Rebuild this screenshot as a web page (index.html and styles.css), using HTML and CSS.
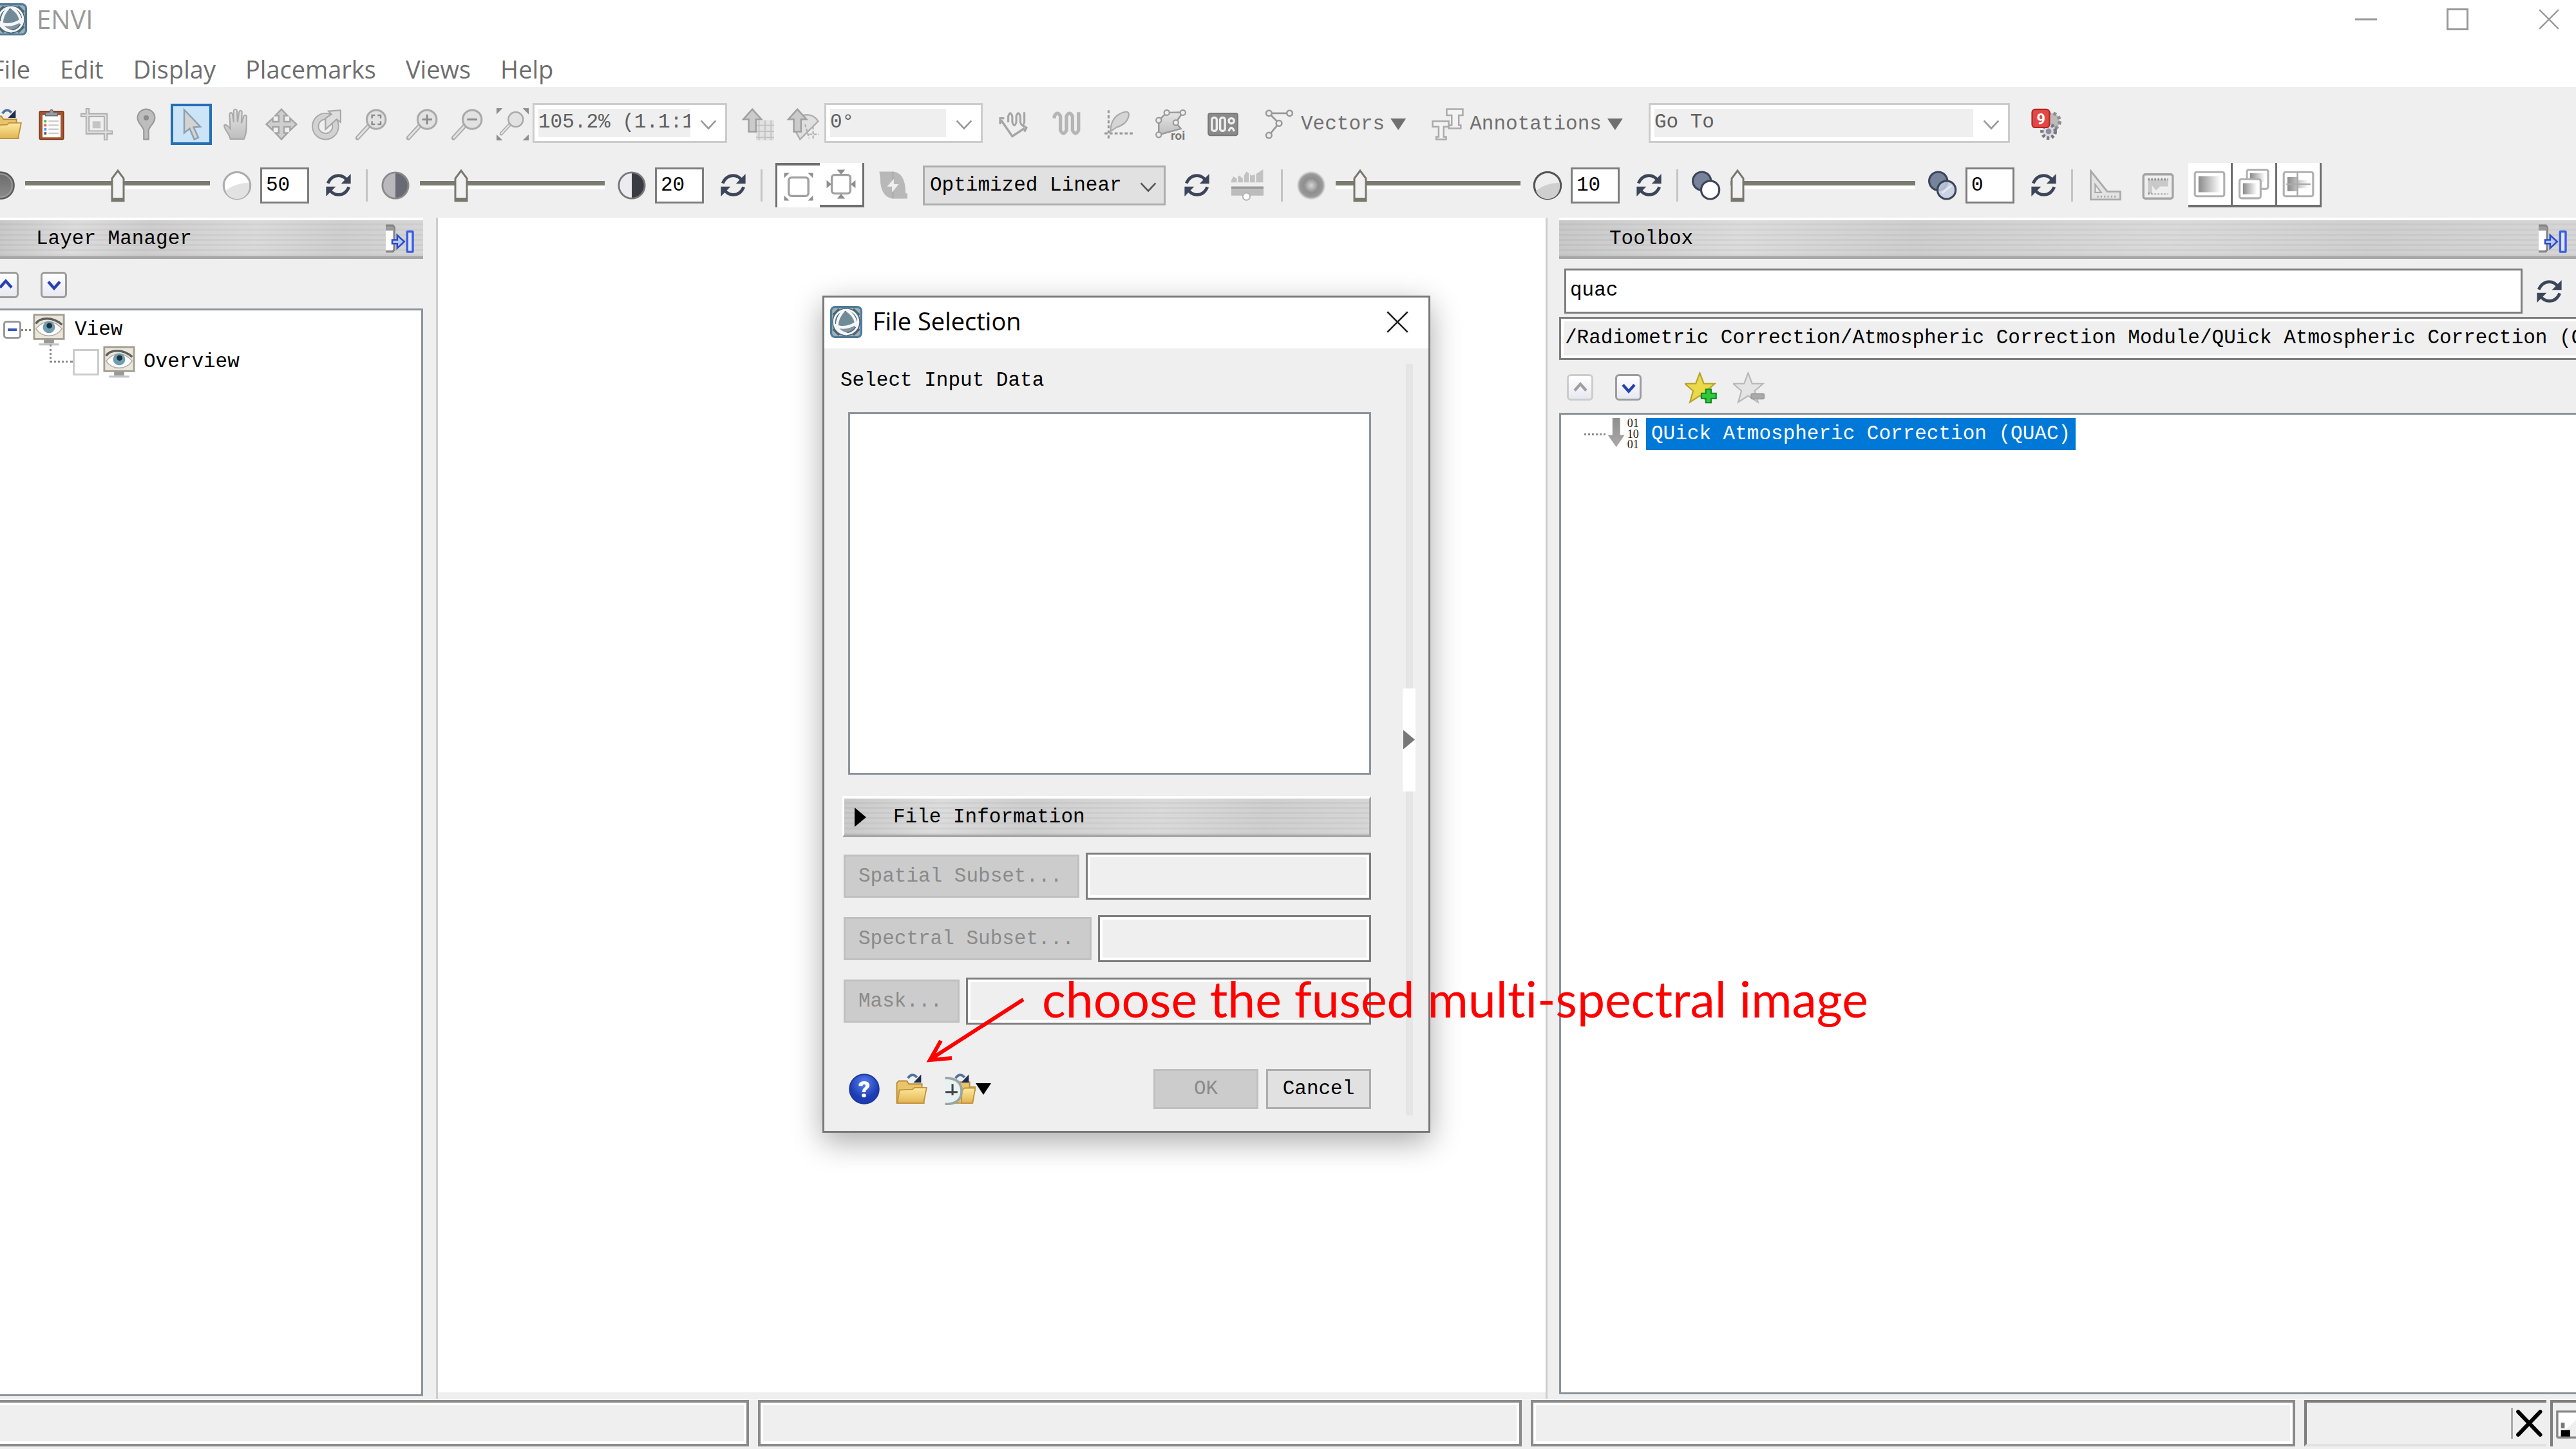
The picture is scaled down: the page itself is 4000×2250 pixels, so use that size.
FILE: index.html
```html
<!DOCTYPE html>
<html lang="en">
<head>
<meta charset="utf-8">
<title>ENVI</title>
<link rel="stylesheet" href="styles.css">
</head>
<body>
<svg class="defs" aria-hidden="true">
  <defs>
    <linearGradient id="gold" x1="0" y1="0" x2="0" y2="1"><stop offset="0" stop-color="#fdeb9e"/><stop offset="1" stop-color="#e3b452"/></linearGradient>
    <linearGradient id="grey" x1="0" y1="0" x2="0" y2="1"><stop offset="0" stop-color="#e6e6e6"/><stop offset="1" stop-color="#bdbdbd"/></linearGradient>
    <linearGradient id="dark" x1="0" y1="0" x2="0" y2="1"><stop offset="0" stop-color="#6a6a6a"/><stop offset="1" stop-color="#8c8c8c"/></linearGradient>
    <linearGradient id="fade" x1="0" y1="0" x2="1" y2="0"><stop offset="0" stop-color="#8a8a8a"/><stop offset="1" stop-color="#ffffff"/></linearGradient>
    <radialGradient id="halo"><stop offset="0" stop-color="#d6d6d6"/><stop offset=".5" stop-color="#8e8e8e"/><stop offset=".8" stop-color="#9a9a9a"/><stop offset="1" stop-color="#efefef"/></radialGradient>
    <radialGradient id="blue" cx=".5" cy=".3"><stop offset="0" stop-color="#5a82f0"/><stop offset="1" stop-color="#1c3cb4"/></radialGradient>
  </defs>
  <symbol id="logo" viewBox="0 0 16 16"><rect x=".5" y=".5" width="15" height="15" rx="2" fill="#9db0bb" stroke="#4f7a96" stroke-width="1"/><path d="M1.500 4.500 4.500 1.500M11.500 14.500l3-3M1.500 11.500l3 3M11.500 1.500l3 3" stroke="#4d6675" stroke-width="1.100"/><circle cx="8" cy="8" r="6" fill="#8296a2" stroke="#4d6675" stroke-width="2"/><path d="M7.500 3Q4.500 6 4 10q4 2.500 8.300 0Q11.500 5 7.500 3z" fill="#718a97"/><g fill="none" stroke="#f4f6f7"><circle cx="8" cy="8" r="6" stroke-width="1"/><path d="M7 2Q3 6 3.500 11q2 2.500 5 3M8 2q5 3 5 8.500" stroke-width="1.300"/><path d="M2.200 9.500q5 3 11.600-1.500" stroke-width="1.500"/></g></symbol>
  <symbol id="folder" viewBox="0 0 16 16"><path d="M.5 15V5l1-1h4l1 1.500H13v2L14 15z" fill="#e9c46a" stroke="#b98b36" stroke-width=".6"/><path d="M.8 15 1.800 8.500l6.500-.3 1-.9h6L13.800 15z" fill="url(#gold)" stroke="#c0923c" stroke-width=".6"/><path d="M6 2.600Q8-.4 10.500 2.200" fill="none" stroke="#52719a" stroke-width="1.200"/><path d="M12.600.8v4H8.800z" fill="#1d2d4d"/></symbol>
  <symbol id="clip" viewBox="0 0 16 16"><rect x="2" y="1.500" width="12" height="14" rx=".6" fill="#a6532f" stroke="#7d3818" stroke-width=".5"/><path d="M3.500 3.500h9v11h-9z" fill="#fff"/><path d="M5 3.800V2h2Q8-.6 9 2h2v1.800z" fill="#9b9ba5" stroke="#666" stroke-width=".4"/><path d="M4.300 6.500h1.200" stroke="#2c2" stroke-width="1.200"/><path d="M4.300 8.500h1.200" stroke="#e55" stroke-width="1.200"/><path d="M4.300 10.500h1.200" stroke="#49f" stroke-width="1.200"/><path d="M4.300 12.500h1.200" stroke="#555" stroke-width="1.200"/><path d="M6.500 6.500h5M6.500 8.500h5M6.500 10.500h5M6.500 12.500h5" stroke="#ccc" stroke-width=".8"/></symbol>
  <symbol id="crop" viewBox="0 0 16 16"><path d="M3.500 0v12H16M0 3.500h12.500V16" fill="none" stroke="#a8a8a8" stroke-width="2"/><path d="M3.500.5v11.500H15.500M.5 3.500h12V15.500" fill="none" stroke="#dcdcdc" stroke-width=".9"/><path d="M6 10V6.500h4V10z" fill="#c4c4c4"/></symbol>
  <symbol id="pin" viewBox="0 0 16 16"><path d="M8 .5a4.300 4.300 0 0 1 4.300 4.300C12.300 7.500 9.500 9 9.200 11v4.500H6.800V11C6.500 9 3.700 7.500 3.700 4.800A4.300 4.300 0 0 1 8 .5z" fill="#bdbdbd" stroke="#999" stroke-width=".7"/><circle cx="8" cy="4.800" r="1.300" fill="#8b8b8b"/></symbol>
  <symbol id="cursor" viewBox="0 0 16 16"><path d="M4.500.8v11.500l2.700-2.200 2.300 5.400 2-.9-2.300-5.100 3.300-.3z" fill="#d3d3d3" stroke="#8fa0ad" stroke-width=".8"/></symbol>
  <symbol id="hand" viewBox="0 0 16 16"><path d="M5 15.300C4.500 12.500 1.500 10 2 8.500c.8-.8 2 .6 3 1.700L4.600 3c.2-1 1.200-1 1.500 0l.6 4V1.300c.2-1 1.400-1 1.600 0L8.600 7l.8-5.200c.3-.9 1.400-.7 1.400.2L10.500 7.500l1.200-3.500c.5-.9 1.500-.5 1.400.4-.3 4 .5 7-1.300 10.900z" fill="url(#grey)" stroke="#aaa" stroke-width=".7"/></symbol>
  <symbol id="move" viewBox="0 0 16 16"><path d="m8 .5 3 3.200H9.300v3h3V5l3.200 3-3.200 3V9.300h-3v3H11l-3 3.200-3-3.200h1.700v-3h-3V11L.5 8l3.200-3v1.700h3v-3H5z" fill="#cfcfcf" stroke="#a5a5a5" stroke-width=".8"/></symbol>
  <symbol id="rotate" viewBox="0 0 16 16"><circle cx="7.500" cy="9" r="5" fill="none" stroke="#a8a8a8" stroke-width="3.600"/><circle cx="7.500" cy="9" r="5" fill="none" stroke="#d2d2d2" stroke-width="2.400"/><path d="M9 1.500 15 1v6l-2-1.500L7.500 10.500V5l3-2z" fill="#dedede" stroke="#a8a8a8" stroke-width=".7"/></symbol>
  <symbol id="glass" viewBox="0 0 16 16"><path d="M6.800 8.500 1 14.800" stroke="#aaa" stroke-width="2.200" stroke-linecap="round"/><path d="M6.800 8.500 1.200 14.600" stroke="#e2e2e2" stroke-width="1" stroke-linecap="round"/><circle cx="10.300" cy="5.600" r="4.700" fill="#e2e2e2" stroke="#aaa" stroke-width="1"/></symbol>
  <symbol id="zfit" viewBox="0 0 16 16"><use href="#glass"/><path d="M8.200 5V3.500h1.500M11 3.500h1.500V5M12.500 6.500V8H11M9.700 8H8.200V6.500" fill="none" stroke="#8c8c8c" stroke-width=".8"/></symbol>
  <symbol id="zin" viewBox="0 0 16 16"><use href="#glass"/><path d="M7.800 5.600h5M10.300 3.100v5" stroke="#8c8c8c"/></symbol>
  <symbol id="zout" viewBox="0 0 16 16"><use href="#glass"/><path d="M7.800 5.600h5" stroke="#8c8c8c"/></symbol>
  <symbol id="zall" viewBox="0 0 16 16"><use href="#glass" x="1.500" y="1.200" width="12.500" height="12.500"/><path d="M0 3V0h3zM13 0h3v3zM16 13v3h-3zM3 16H0v-3z" fill="#8e8e8e"/></symbol>
  <symbol id="north" viewBox="0 0 16 16"><path d="M7 6h9v10H7z" fill="#e2e2e2"/><path d="M7 8.500h9M7 11.500h9M7 14.500h9M8.500 6v10M11.500 6v10M14.500 6v10" stroke="#c2c2c2" stroke-width=".6"/><path d="m5.200.5 4.500 5H7v6.200H3.400V5.500H.7z" fill="#cbcbcb" stroke="#a0a0a0" stroke-width=".8"/></symbol>
  <symbol id="northrot" viewBox="0 0 16 16"><path d="M8 3.500q5-1 7.500 3L6.500 15.500 4 11" fill="#e0e0e0" stroke="#b0b0b0" stroke-width=".8"/><path d="m5.200.5 4.500 5H7v6.200H3.400V5.500H.7z" fill="#cbcbcb" stroke="#a0a0a0" stroke-width=".8"/><path d="M9 8l2 7M11 13h5M13 9v7" stroke="#b0b0b0" stroke-width=".7" stroke-dasharray="1.500 .8"/></symbol>
  <symbol id="profile" viewBox="0 0 16 16"><path d="M1.500 6 7 14l6-4M1 8V5h2M12 8.500l2 1.200-1 2" fill="none" stroke="#a5a5a5" stroke-width="1.100"/><path d="M5 7V4q1-3 2 0v3q1 3 2 0V4q1-3 2 0v3q1 3 2 0V2" fill="none" stroke="#a5a5a5"/></symbol>
  <symbol id="wave" viewBox="0 0 16 16"><path d="M2 5V4q1.500-3 3 0v7q1.500 3 3 0V4q1.500-3 3 0v7q1.500 3 3 0V2" fill="none" stroke="#b5b5b5" stroke-width="1.700"/></symbol>
  <symbol id="scatter" viewBox="0 0 16 16"><path d="M3 1v14M1 12.500h14" stroke="#999" stroke-dasharray="1.500 1"/><path d="M4 11.500Q4 4 10.500 2q3-1 2.500 2Q12 8 7 9.500z" fill="#d5d5d5" stroke="#aaa" stroke-width=".7"/></symbol>
  <symbol id="roi" viewBox="0 0 16 16"><path d="m6 2.200 8-.2-3.500 5.200 2.500 3-11 3L2 6z" fill="url(#grey)" stroke="#999" stroke-width=".8"/><g fill="#eee" stroke="#999" stroke-width=".7"><circle cx="6" cy="2.200" r="1.300"/><circle cx="14" cy="2.200" r="1.300"/><circle cx="2" cy="6" r="1.300"/><circle cx="10.500" cy="7.200" r="1.300"/><circle cx="2" cy="13.200" r="1.300"/></g><text x="8" y="15.600" font-family="Roboto, sans-serif" font-size="6" font-weight="700" fill="#777" stroke="#efefef" stroke-width=".8" paint-order="stroke">roi</text></symbol>
  <symbol id="count" viewBox="0 0 16 16"><rect x=".7" y="2.500" width="14.600" height="11" rx="1" fill="#8a8a8a" stroke="#777" stroke-width=".6"/><g fill="#8a8a8a" stroke="#eee" stroke-width="1.100"><rect x="2.500" y="4.700" width="2.400" height="6.600" rx="1"/><rect x="6.600" y="4.700" width="2.400" height="6.600" rx="1"/><circle cx="12.200" cy="6.300" r="1.300"/><path d="M10.800 11.500q1.400-3.500 2.800 0"/></g></symbol>
  <symbol id="vectors" viewBox="0 0 16 16"><path d="M3 2.500h10.500M3 2.500 8 7.500 3 13.500" fill="none" stroke="#999" stroke-width=".9"/><g fill="#eee" stroke="#999" stroke-width=".8"><circle cx="3" cy="2.500" r="1.400"/><circle cx="13.300" cy="2.500" r="1.400"/><circle cx="8" cy="7.500" r="1.400"/><circle cx="3" cy="13.500" r="1.400"/></g></symbol>
  <symbol id="letters" viewBox="0 0 16 16"><g fill="#f3f3f3" stroke="#aaa" stroke-width=".8"><path d="M7.500.5h8V3.500h-2v5h1v1.500H8.500V8.500h1.500v-5h-2.500z"/><path d="M.5 6.500h8v2.700H6v5h1.200v1.300H2.300v-1.300h1.200v-5h-3z"/></g></symbol>
  <symbol id="jobs" viewBox="0 0 16 16"><circle cx="10.500" cy="6.500" r="4" fill="#bbb" stroke="#8f8f8f" stroke-width="1.700" stroke-dasharray="1.500 1.300"/><circle cx="9" cy="11.500" r="3.300" fill="#d9d9e6" stroke="#777" stroke-width="1.700" stroke-dasharray="1.300 1.100"/><circle cx="9" cy="11.500" r="1.400" fill="#8d8d9c"/><rect x=".8" y=".6" width="8.600" height="9" rx="1.500" fill="#e04848" stroke="#b82222" stroke-width=".7"/><text x="3" y="7.900" font-family="Roboto, sans-serif" font-size="7.500" font-weight="700" fill="#fff">9</text></symbol>
  <symbol id="refresh" viewBox="0 0 16 16"><path d="M2.200 7Q4 2.700 8 2.700q3.200 0 5 3M13.800 9q-1.800 4.300-5.800 4.300-3.200 0-5-3" fill="none" stroke="#3d4659" stroke-width="1.700"/><path d="M14.800 1.800v5.400H9.500zM1.200 14.200V8.800h5.300z" fill="#3d4659"/></symbol>
  <symbol id="balldark" viewBox="0 0 16 16"><circle cx="8" cy="8" r="7.200" fill="url(#dark)" stroke="#5a5a5a" stroke-width=".8"/><circle cx="8" cy="8" r="6.200" fill="none" stroke="#999" stroke-width=".7"/></symbol>
  <symbol id="balllight" viewBox="0 0 16 16"><circle cx="8" cy="8" r="7.200" fill="#fff" stroke="#adadad" stroke-width="1.100"/><path d="M1.800 11Q6 7 14.200 6.500A6.300 6.300 0 0 1 1.800 11z" fill="#e2e2e2"/></symbol>
  <symbol id="ballsharp" viewBox="0 0 16 16"><circle cx="8" cy="8" r="7.200" fill="#eee" stroke="#555" stroke-width="1.100"/><path d="M1.800 11Q6 7 14.200 6.500A6.300 6.300 0 0 1 1.800 11z" fill="#cfcfcf"/></symbol>
  <symbol id="ballblur" viewBox="0 0 16 16"><circle cx="8" cy="8" r="7.800" fill="url(#halo)"/></symbol>
  <symbol id="halfsoft" viewBox="0 0 16 16"><circle cx="8" cy="8" r="7" fill="#b9b9bd"/><path d="M8 1a7 7 0 0 1 0 14z" fill="#6a6a74"/><circle cx="8" cy="8" r="7" fill="none" stroke="#8a8a8a"/></symbol>
  <symbol id="halfhard" viewBox="0 0 16 16"><circle cx="8" cy="8" r="7" fill="#ececf0"/><path d="M8 1a7 7 0 0 1 0 14z" fill="#3a3a42"/><circle cx="8" cy="8" r="7" fill="none" stroke="#777"/></symbol>
  <symbol id="opaque" viewBox="0 0 16 16"><circle cx="5.800" cy="5.600" r="4.900" fill="#77839a" stroke="#3d4659" stroke-width="1.100"/><circle cx="10.300" cy="10.400" r="4.900" fill="#fff" stroke="#3d4659" stroke-width="1.100"/></symbol>
  <symbol id="clear" viewBox="0 0 16 16"><circle cx="5.800" cy="5.600" r="4.900" fill="#77839a" stroke="#3d4659" stroke-width="1.100"/><circle cx="10.300" cy="10.400" r="4.900" fill="#c3cde0" fill-opacity=".85" stroke="#3d4659" stroke-width="1.100"/><path d="m8 12 5-4" stroke="#e6ebf5"/></symbol>
  <symbol id="extent" viewBox="0 0 16 16"><rect x="2.700" y="3" width="10.600" height="10" rx="1.500" fill="#fff" stroke="#a0a0a0" stroke-width="1.200"/><path d="M.2 3.300V.5h2.800zM13 .5h2.800v2.800zM15.800 12.700v2.800H13zM3 15.500H.2v-2.800z" fill="#8e8e8e"/></symbol>
  <symbol id="extentout" viewBox="0 0 16 16"><rect x="3" y="3" width="10" height="10" rx="1.500" fill="#fff" stroke="#a0a0a0" stroke-width="1.200"/><path d="M5.800.2h4.400L8 2.800zM5.800 15.800h4.400L8 13.200zM.2 5.800v4.400L2.800 8zM15.800 5.800v4.400L13.200 8z" fill="#8e8e8e"/></symbol>
  <symbol id="flip" viewBox="0 0 16 16"><path d="M.5.500H8Q15 1 15 12.500h1V15.500H8.500Q1 15 1 4z" fill="#b8b8b8"/><path d="M8 .5v15" stroke="#a4a4a4" stroke-width=".6"/><path d="M8.500 4.500 4.800 8.800h2.700V12l3.700-4.500H8.500z" fill="#efefef"/></symbol>
  <symbol id="histo" viewBox="0 0 16 16"><path d="M0 6.500V5.500l1-2 1.500 1L4 3l1.500 1.500L7.500 1 10 3l2-.5L15.800 0v6.500z" fill="#c2c2c2"/><path d="M3 6.500V3.500M6 6.500V3M9 6.500V2M12 6.500V2" stroke="#efefef" stroke-width=".6"/><path d="M0 8.500h16v1.200H0z" fill="#999"/><path d="M0 9.700h16V13H0z" fill="#bcbcbc"/><circle cx="7.500" cy="13.500" r="1.800" fill="#fff" stroke="#b0b0b0" stroke-width=".6"/></symbol>
  <symbol id="angle" viewBox="0 0 16 16"><path d="M.8.8 9 11h6.500v4H.8z" fill="#e3e3e3" stroke="#aaa" stroke-width=".9"/><path d="M3 7.500 6 11.500H3z" fill="#efefef" stroke="#aaa" stroke-width=".7"/><path d="M4 13.500h10" stroke="#aaa" stroke-dasharray=".7 1"/></symbol>
  <symbol id="ruler" viewBox="0 0 16 16"><rect x=".7" y="2.500" width="14.600" height="12" rx="1" fill="#eee" stroke="#a3a3a3" stroke-width="1.100"/><path d="M3 5h10v7H3z" fill="#c9c9c9"/><path d="M3 5h10M3 12h10" stroke="#888" stroke-dasharray=".8 .8"/><path d="m5 8 2 2.500 2-2h4V12H5z" fill="#eee"/></symbol>
  <symbol id="portal" viewBox="0 0 16 16"><rect x=".7" y="2" width="14.600" height="12" rx="1" fill="#fff" stroke="#b0b0b0"/><path d="M2.500 4h11v8h-11z" fill="url(#fade)"/></symbol>
  <symbol id="stack" viewBox="0 0 16 16"><rect x="4.500" y=".8" width="10.500" height="9.500" rx="1" fill="#fff" stroke="#b0b0b0"/><path d="M6 2.500h7.500V7H6z" fill="url(#fade)"/><rect x=".8" y="5.500" width="10.500" height="9.500" rx="1" fill="#fff" stroke="#b0b0b0"/><path d="M2.500 7.500H9.500V13h-7z" fill="url(#fade)"/></symbol>
  <symbol id="split" viewBox="0 0 16 16"><rect x=".7" y="2" width="14.600" height="12" rx="1" fill="#fff" stroke="#b0b0b0"/><path d="M2.500 4.500H8v7H2.500zM8 6h5v4H8z" fill="url(#fade)"/><path d="M7.500 2v12M2 8h12" stroke="#aaa" stroke-width=".8"/></symbol>
  <symbol id="dock" viewBox="0 0 16 16"><path d="M0 .8h3.800l.8 1v12l-.8 1H0z" fill="#fff"/><path d="M0 .8h3.800l.8 1v12l-.8 1H0" fill="none" stroke="#858585" stroke-width="1.200"/><path d="M0 1.500h4.500v2H0z" fill="#999"/><path d="M3.500 8.500h2.700V6L10 9.500 6.200 13v-2.500H3.500z" fill="#b9c8f8" stroke="#2b4bcc" stroke-width=".9"/><rect x="11.600" y="4" width="3" height="11" rx=".4" fill="#dde6ff" stroke="#3c5de0" stroke-width="1.200"/></symbol>
  <symbol id="up" viewBox="0 0 16 16"><path d="m4 10 4-4.500L12 10" fill="none" stroke="currentColor" stroke-width="2"/></symbol>
  <symbol id="down" viewBox="0 0 16 16"><path d="m4 6 4 4.500L12 6" fill="none" stroke="currentColor" stroke-width="2"/></symbol>
  <symbol id="chev" viewBox="0 0 16 16"><path d="M1 4.500 8 12l7-7.500" fill="none" stroke="currentColor" stroke-width="1.600"/></symbol>
  <symbol id="eye" viewBox="0 0 16 16"><rect x=".6" y=".6" width="14.800" height="12" fill="#ece6da" stroke="#a39d92" stroke-width=".9"/><path d="M1.500 7.500Q8 .5 14.500 7.500 12 11 8 11T1.500 7.500z" fill="#fff" stroke="#b5b0a8" stroke-width=".5"/><path d="M1.500 5Q3 2.500 7 2.500t7.500 3" fill="none" stroke="#5f5f5f" stroke-width="1.100"/><circle cx="8" cy="6.700" r="3" fill="#6d9eb3"/><circle cx="8.200" cy="6" r="1.400" fill="#1d2f38"/><path d="M5.500 12.800h5v2h-5z" fill="#999"/><path d="M3 15.300h10" stroke="#c4c4c4" stroke-width="1"/></symbol>
  <symbol id="star" viewBox="0 0 16 16"><path d="m7.500.7 2 5.300h5.400l-4.100 3.600 1.600 5.600-4.900-3.200-4.900 3.200 1.600-5.600L.1 6h5.400z"/></symbol>
  <symbol id="algo" viewBox="0 0 16 16"><path d="M2.500 0h3.800v8.500h2.200L4.400 14.500.2 8.500h2.300z" fill="url(#dark)" opacity=".75"/><g font-family="Liberation Serif, serif" font-size="5.800" fill="#222"><text x="9.800" y="4.500">01</text><text x="9.800" y="9.800">10</text><text x="9.800" y="15">01</text></g></symbol>
  <symbol id="help" viewBox="0 0 16 16"><circle cx="8" cy="8" r="7.300" fill="url(#blue)" stroke="#1d379c" stroke-width=".6"/><text x="8" y="12.200" text-anchor="middle" font-family="Roboto, sans-serif" font-size="11.500" font-weight="900" fill="#fff">?</text></symbol>
  <symbol id="recent" viewBox="0 0 16 16"><path d="M6 15V4.500h7v2.500h3L14 15z" fill="#e9c46a" stroke="#b98b36" stroke-width=".6"/><path d="M9 15V9l1.500-1.500h5.300L14.500 15z" fill="url(#gold)" stroke="#c0923c" stroke-width=".6"/><path d="M6 2.600Q8-.4 10.500 2.200" fill="none" stroke="#52719a" stroke-width="1.200"/><path d="M12.600.8v4H8.800z" fill="#1d2d4d"/><path d="M.8 2.500Q9 2.500 9 9 9 15.500.8 15.500z" fill="#e7f1f1"/><path d="M.8 2.500Q9 2.500 9 9 9 15.500.8 15.500" fill="none" stroke="#99a5a5" stroke-width="1.200"/><path d="M4.500 5.500v5.500M1 9.500h6" fill="none" stroke="#444"/></symbol>
  <symbol id="cross" viewBox="0 0 16 16"><path d="M1 1 15 15M15 1 1 15" stroke="currentColor" stroke-width="1.100"/></symbol>
</svg>

<div class="app">
  <header class="titlebar">
    <svg class="ico app-logo"><use href="#logo"/></svg>
    <h1 class="app-name">ENVI</h1>
    <div class="winctl">
      <button aria-label="Minimize"><svg viewBox="0 0 16 16"><path d="M0 8h16" stroke="currentColor" stroke-width="1.500"/></svg></button>
      <button aria-label="Maximize"><svg viewBox="0 0 16 16"><path d="M.7.7h14.600v14.600H.7z" fill="none" stroke="currentColor" stroke-width="1.400"/></svg></button>
      <button aria-label="Close"><svg><use href="#cross"/></svg></button>
    </div>
  </header>
  <nav class="menubar">
    <a href="#file">File</a><a href="#edit">Edit</a><a href="#display">Display</a><a href="#placemarks">Placemarks</a><a href="#views">Views</a><a href="#help-menu">Help</a>
  </nav>

  <div class="toolbars">
    <div class="row row-nav">
      <div class="set">
        <button class="tool" aria-label="Open"><svg class="ico"><use href="#folder"/></svg></button>
        <button class="tool" aria-label="Data Manager"><svg class="ico"><use href="#clip"/></svg></button>
        <button class="tool" aria-label="Crop"><svg class="ico"><use href="#crop"/></svg></button>
      </div>
      <div class="set set-pick">
        <button class="tool" aria-label="Placemark"><svg class="ico"><use href="#pin"/></svg></button>
        <button class="tool tool-on" aria-label="Select"><svg class="ico"><use href="#cursor"/></svg></button>
        <button class="tool" aria-label="Pan"><svg class="ico"><use href="#hand"/></svg></button>
        <button class="tool" aria-label="Fly"><svg class="ico"><use href="#move"/></svg></button>
        <button class="tool" aria-label="Rotate"><svg class="ico"><use href="#rotate"/></svg></button>
        <button class="tool" aria-label="Zoom"><svg class="ico"><use href="#zfit"/></svg></button>
      </div>
      <div class="set set-zoom">
        <button class="tool" aria-label="Zoom In"><svg class="ico"><use href="#zin"/></svg></button>
        <button class="tool" aria-label="Zoom Out"><svg class="ico"><use href="#zout"/></svg></button>
        <button class="tool" aria-label="Full Extent"><svg class="ico"><use href="#zall"/></svg></button>
      </div>
      <div class="combo combo-zoom"><input aria-label="Zoom level" value="105.2% (1.1:1)"><button aria-label="Zoom levels"><svg><use href="#chev"/></svg></button></div>
      <div class="set set-north">
        <button class="tool" aria-label="Image up"><svg class="ico"><use href="#north"/></svg></button>
        <button class="tool" aria-label="North up"><svg class="ico"><use href="#northrot"/></svg></button>
      </div>
      <div class="combo combo-angle"><input aria-label="Rotation" value="0°"><button aria-label="Rotations"><svg><use href="#chev"/></svg></button></div>
      <div class="set set-plot">
        <button class="tool" aria-label="Arbitrary Profile"><svg class="ico"><use href="#profile"/></svg></button>
        <button class="tool" aria-label="Spectral Profile"><svg class="ico"><use href="#wave"/></svg></button>
        <button class="tool" aria-label="Scatter Plot"><svg class="ico"><use href="#scatter"/></svg></button>
        <button class="tool" aria-label="Region of Interest"><svg class="ico"><use href="#roi"/></svg></button>
        <button class="tool" aria-label="Feature Counting"><svg class="ico"><use href="#count"/></svg></button>
      </div>
      <button class="drop"><svg class="ico"><use href="#vectors"/></svg>Vectors<i class="tri"></i></button>
      <button class="drop"><svg class="ico"><use href="#letters"/></svg>Annotations<i class="tri"></i></button>
      <div class="combo combo-goto"><input aria-label="Go To" value="Go To"><button aria-label="Locations"><svg><use href="#chev"/></svg></button></div>
      <button class="tool tool-jobs" aria-label="Running jobs"><svg class="ico"><use href="#jobs"/></svg></button>
    </div>

    <div class="row row-adjust">
      <div class="adjust">
        <svg class="ball"><use href="#balldark"/></svg><input class="slide" type="range" aria-label="Brightness" value="50"><svg class="ball"><use href="#balllight"/></svg><input class="num" aria-label="Brightness value" value="50"><button class="reset" aria-label="Reset brightness"><svg><use href="#refresh"/></svg></button>
      </div>
      <div class="adjust">
        <svg class="ball"><use href="#halfsoft"/></svg><input class="slide" type="range" aria-label="Contrast" value="20"><svg class="ball"><use href="#halfhard"/></svg><input class="num" aria-label="Contrast value" value="20"><button class="reset" aria-label="Reset contrast"><svg><use href="#refresh"/></svg></button>
      </div>
      <div class="stretch">
        <button class="toggle toggle-in" aria-label="Stretch on full extent"><svg class="ball"><use href="#extent"/></svg></button>
        <button class="toggle" aria-label="Stretch on view extent"><svg class="ball"><use href="#extentout"/></svg></button>
        <button class="reset flip" aria-label="Update stretch"><svg><use href="#flip"/></svg></button>
        <div class="select"><select aria-label="Stretch type"><option>Optimized Linear</option></select><svg><use href="#chev"/></svg></div>
        <button class="reset" aria-label="Reset stretch"><svg><use href="#refresh"/></svg></button>
        <button class="tool histo" aria-label="Histogram"><svg class="ico"><use href="#histo"/></svg></button>
      </div>
      <div class="adjust">
        <svg class="ball"><use href="#ballblur"/></svg><input class="slide" type="range" aria-label="Sharpen" value="10"><svg class="ball"><use href="#ballsharp"/></svg><input class="num" aria-label="Sharpen value" value="10"><button class="reset" aria-label="Reset sharpen"><svg><use href="#refresh"/></svg></button>
      </div>
      <div class="adjust">
        <svg class="ball"><use href="#opaque"/></svg><input class="slide" type="range" aria-label="Transparency" value="0"><svg class="ball"><use href="#clear"/></svg><input class="num" aria-label="Transparency value" value="0"><button class="reset" aria-label="Reset transparency"><svg><use href="#refresh"/></svg></button>
      </div>
      <div class="views">
        <button class="tool" aria-label="Measure"><svg class="ico"><use href="#angle"/></svg></button>
        <button class="tool" aria-label="Annotate scale"><svg class="ico"><use href="#ruler"/></svg></button>
        <div class="portals">
          <button class="toggle" aria-label="Blend"><svg class="ico"><use href="#portal"/></svg></button>
          <button class="toggle" aria-label="Flicker"><svg class="ico"><use href="#stack"/></svg></button>
          <button class="toggle" aria-label="Swipe"><svg class="ico"><use href="#split"/></svg></button>
        </div>
      </div>
    </div>
  </div>

  <main class="work">
    <section class="pane pane-left">
      <header class="bar"><h2>Layer Manager</h2><button class="dock" aria-label="Dock"><svg><use href="#dock"/></svg></button></header>
      <div class="fold"><button class="sq" aria-label="Collapse all"><svg><use href="#up"/></svg></button><button class="sq" aria-label="Expand all"><svg><use href="#down"/></svg></button></div>
      <ul class="tree">
        <li class="node"><button class="minus" aria-label="Collapse View"></button><i class="dots"></i><svg class="ico"><use href="#eye"/></svg><span>View</span></li>
        <li class="node node-child"><i class="elbow"></i><input type="checkbox" id="ov"><svg class="ico"><use href="#eye"/></svg><label for="ov">Overview</label></li>
      </ul>
    </section>
    <section class="canvas" aria-label="View"></section>
    <section class="pane pane-right">
      <header class="bar"><h2>Toolbox</h2><button class="dock" aria-label="Dock"><svg><use href="#dock"/></svg></button></header>
      <div class="search"><input aria-label="Search tools" value="quac"><button class="reset" aria-label="Refresh tools"><svg><use href="#refresh"/></svg></button></div>
      <input class="path" aria-label="Tool path" readonly value="/Radiometric Correction/Atmospheric Correction Module/QUick Atmospheric Correction (QUAC)">
      <div class="fold fold-tools">
        <button class="sq sq-off" aria-label="Collapse all"><svg><use href="#up"/></svg></button><button class="sq" aria-label="Expand all"><svg><use href="#down"/></svg></button>
        <button class="tool fav" aria-label="Add favorite"><svg class="ico" viewBox="0 0 16 16"><use href="#star" fill="#ecd94a" stroke="#b7a32c" stroke-width=".7"/><path d="M10.500 8.800h2.600v2h2.500v2.600h-2.500v2h-2.600v-2H8.300v-2.600h2.200z" fill="#2fca3c" stroke="#178a25" stroke-width=".7"/></svg></button>
        <button class="tool" aria-label="Remove favorite"><svg class="ico" viewBox="0 0 16 16"><use href="#star" fill="#e4e4e4" stroke="#b8b8b8" stroke-width=".7"/><rect x="9" y="11" width="6.500" height="2.600" rx=".7" fill="#aaa" stroke="#999" stroke-width=".5"/></svg></button>
      </div>
      <ul class="tree">
        <li class="node node-tool"><i class="dots"></i><svg class="ico"><use href="#algo"/></svg><span class="picked">QUick Atmospheric Correction (QUAC)</span></li>
      </ul>
    </section>
  </main>

  <footer class="status">
    <div class="cell"></div><div class="cell"></div><div class="cell"></div>
    <div class="progress"><button aria-label="Cancel task"><svg viewBox="0 0 16 16"><path d="M1.500 1.500 14 14.500M14 1.500 1.500 14.500" stroke="#000" stroke-width="2.200" stroke-linecap="round"/></svg></button></div>
    <div class="tail"><svg viewBox="0 0 16 16"><path d="M1 15V1h15M1 15h15" fill="#fff" stroke="#888" stroke-width="1.200"/><path d="M3 7h2v3H3z" fill="#777"/><path d="M3 11h5v3.500H3z" fill="#000"/><path d="m15 3-2 2 2 2M15 8l-2 2 2 2" fill="none" stroke="#999"/></svg></div>
  </footer>

  <section class="dialog" role="dialog" aria-labelledby="dlg-title">
    <header class="dlg-head"><svg class="ico"><use href="#logo"/></svg><h2 id="dlg-title">File Selection</h2><button aria-label="Close dialog"><svg><use href="#cross"/></svg></button></header>
    <div class="dlg-body">
      <div class="form">
        <h3>Select Input Data</h3>
        <div class="list" role="listbox" aria-label="Input data"></div>
        <button class="bar info"><i class="caret"></i>File Information</button>
        <div class="field"><button disabled>Spatial Subset...</button><input aria-label="Spatial subset" disabled></div>
        <div class="field"><button disabled>Spectral Subset...</button><input aria-label="Spectral subset" disabled></div>
        <div class="field"><button disabled>Mask...</button><input aria-label="Mask" disabled></div>
        <div class="actions">
          <button class="tool" aria-label="Help"><svg class="ico"><use href="#help"/></svg></button>
          <button class="tool" aria-label="Open file"><svg class="ico"><use href="#folder"/></svg></button>
          <button class="tool recent" aria-label="Open recent"><svg class="ico"><use href="#recent"/></svg><i class="tri tri-dark"></i></button>
          <button class="push push-first" disabled>OK</button>
          <button class="push">Cancel</button>
        </div>
      </div>
      <div class="rail"><button aria-label="Show more"><i></i></button></div>
    </div>
  </section>

  <svg class="pointer" viewBox="0 0 156 108" aria-hidden="true"><path d="M151 8 8 100M23 72 6 102l34-3" fill="none" stroke="#f00" stroke-width="6"/></svg>
  <p class="note">choose the fused multi-spectral image</p>
</div>
</body>
</html>
```
FILE: styles.css
```css
* { box-sizing: border-box; }

body {
  margin: 0;
  background: #efefef;
  color: #000;
  font: 31px/40px "Liberation Mono", monospace;
}

h1, h2, h3, p, ul { margin: 0; padding: 0; font: inherit; }
ul { list-style: none; }
button, input, select { font: inherit; color: inherit; margin: 0; padding: 0; border-radius: 0; outline: 0; }
button { background: none; border: 0; display: flex; align-items: center; justify-content: center; }
svg { display: block; flex: none; }
.defs { position: absolute; width: 0; height: 0; }
.ico { width: 50px; height: 50px; }

.app {
  position: relative;
  display: flex;
  flex-direction: column;
  min-height: 100vh;
  overflow: hidden;
}

/* Window title and menus */
.titlebar {
  display: flex;
  align-items: center;
  height: 60px;
  background: #fff;
  color: #999;
}
.app-logo { margin-left: -8px; }
.app-name { margin-left: 15px; font: 40px/60px "Open Sans", sans-serif; }
.winctl { display: flex; gap: 108px; margin-left: auto; padding-right: 25px; }
.winctl svg { width: 34px; height: 34px; }
.menubar {
  display: flex;
  gap: 46px;
  padding-top: 20px;
  margin-bottom: 7px;
  background: #fff;
  font: 38px/55px "Open Sans", sans-serif;
}
.menubar a { color: #6e6e6e; text-decoration: none; }
.menubar a:first-child { margin-left: -13px; }

/* Toolbars */
.toolbars { padding-bottom: 2px; white-space: nowrap; }
.row { display: flex; align-items: center; height: 97px; }
.row > * { flex: none; }
.set { display: flex; gap: 20px; }
.set, .drop, .tool-jobs { margin-top: 5px; }
.row-nav { margin-left: -15px; }
.set-pick { margin-left: 27px; }
.set-zoom { margin-left: 29px; margin-right: 6px; }
.set-north { margin-left: 23px; margin-right: 8px; }
.set-plot { gap: 31px; margin-left: 24px; margin-right: 37px; }
.tool { flex: none; width: 50px; height: 50px; }
.tool-on { width: 64px; height: 64px; margin: -7px; background: #cce4f7; border: 4px solid #2270b5; }
.tool-jobs { margin-left: 32px; }

.combo {
  display: flex;
  align-items: center;
  height: 62px;
  padding: 0 6px;
  background: #fff;
  border: 3px solid #ccc;
  color: #606060;
}
.combo input { flex: 1; min-width: 0; height: 44px; padding: 0 0 2px; border: 0; background: #efefef; }
.combo button { width: 40px; height: 44px; margin-left: 8px; padding-top: 4px; color: #999; }
.combo button svg { width: 26px; height: 26px; }
.combo-zoom { width: 302px; }
.combo-angle { width: 246px; }
.combo-goto { width: 561px; }

.drop { gap: 9px; color: #707070; margin-right: 40px; }
.tri { width: 24px; height: 18px; background: #707070; clip-path: polygon(0 0, 100% 0, 50% 100%); }
.tri-dark { background: #000; }

.row-adjust { margin-left: -22px; }
.ball { width: 46px; height: 46px; }
.adjust {
  display: flex;
  align-items: center;
  height: 50px;
  padding-right: 20px;
  margin-right: 20px;
  border-right: 3px solid #c4c4c4;
}
.slide {
  appearance: none;
  width: 287px;
  height: 52px;
  margin: 0 19px 0 15px;
  background: linear-gradient(#7b7b72 0 7px, #fff 7px) center / 100% 13px no-repeat;
}
.slide::-webkit-slider-thumb {
  appearance: none;
  width: 22px;
  height: 52px;
  background: url("data:image/svg+xml,%3Csvg xmlns='http://www.w3.org/2000/svg' viewBox='0 0 22 52'%3E%3Cpath d='M2 50V15L11 3l9 12v35z' fill='%23f2f2f2' stroke='%2378786f' stroke-width='3'/%3E%3Cpath d='M2 48h18' stroke='%2378786f' stroke-width='6'/%3E%3C/svg%3E");
}
.num { width: 76px; height: 56px; margin: 0 23px 0 13px; padding-left: 6px; background: #fff; border: 3px solid #7d7d7d; }
.reset { flex: none; width: 45px; height: 50px; }
.reset svg { width: 45px; height: 45px; }

.stretch {
  display: flex;
  align-items: center;
  height: 50px;
  padding-right: 27px;
  margin-right: 21px;
  border-right: 3px solid #c4c4c4;
}
.toggle { width: 69px; height: 69px; background: #fff; border: 0 solid #6e6e6e; border-width: 0 3px 4px 0; }
.toggle-in { border-width: 4px 0 0 3px; }
.flip { margin: 0 24px 0 22px; }
.select { position: relative; width: 377px; margin-right: 26px; }
.select select { appearance: none; display: block; width: 100%; height: 62px; padding: 0 60px 0 8px; background: #e1e1e1; border: 3px solid #adadad; }
.select svg { position: absolute; right: 14px; top: 20px; width: 26px; height: 26px; color: #555; pointer-events: none; }
.histo { margin-left: 31px; }
.views { display: flex; align-items: center; gap: 32px; margin-left: 5px; }
.portals { display: flex; margin-left: -10px; }

/* Working area */
.work { flex: 1; display: grid; grid-template-columns: 17% 1fr 40%; }
.pane { display: flex; flex-direction: column; min-width: 0; }
.pane-left { padding: 0 20px 4px 0; border-right: 3px solid #cdcdcd; }
.pane-right { padding: 0 0 7px 18px; border-left: 3px solid #cdcdcd; }
.canvas { background: #fff; margin-bottom: 10px; }

.bar {
  display: flex;
  align-items: center;
  height: 64px;
  padding-top: 2px;
  border-top: 4px solid #fff;
  border-bottom: 4px solid #a6a6a6;
  background:
    repeating-linear-gradient(#0000 0 5px, #0000000a 5px 8px),
    linear-gradient(100deg, #c8c8c8, #dcdcdc 18%, #cecece 35%, #dadada 60%, #cfcfcf 80%, #d6d6d6);
}
.bar h2 { padding-left: 56px; }
.pane-right .bar h2 { padding-left: 78px; }
.dock { margin-left: auto; width: 46px; height: 46px; margin-right: 12px; }
.dock svg { width: 46px; height: 46px; }

.fold { display: flex; align-items: center; gap: 34px; height: 77px; padding-top: 3px; }
.pane-left .fold { margin-left: -12px; }
.sq { width: 41px; height: 41px; background: linear-gradient(#fff, #e8e8f2); border: 3px solid #9c9c9c; border-radius: 6px; color: #2743b0; }
.sq svg { width: 36px; height: 36px; }
.sq-off { border-color: #ccc; color: #a0a0a0; }
.tree { flex: 1; padding-top: 5px; background: #fff; border: 3px solid #8d939b; }
.pane-left .tree { border-left: 0; }
.pane-right .tree { border-right: 0; }

.node { display: flex; align-items: center; height: 50px; padding-left: 5px; }
.node .ico { margin-right: 15px; }
.minus { width: 28px; height: 28px; background: linear-gradient(#3b56b8, #3b56b8) center / 14px 4px no-repeat #fff; border: 3px solid #999; border-radius: 5px; }
.dots { width: 18px; height: 3px; background: repeating-linear-gradient(90deg, #888 0 3px, #0000 3px 6px); }
.node-child { padding-left: 77px; }
.elbow { width: 36px; height: 28px; margin-bottom: 26px; border: 3px dotted #888; border-width: 0 0 3px 3px; }
.node input { appearance: none; width: 41px; height: 41px; margin-right: 6px; background: #fff; border: 3px solid #ccc; }
.node-child .ico { margin-right: 13px; }
.node-tool { padding-left: 36px; }
.node-tool .dots { width: 36px; }
.node-tool .ico { margin-right: 10px; }
.picked { padding: 0 8px; line-height: 50px; background: #0078d7; color: #fff; }

.search { display: flex; align-items: center; gap: 19px; padding: 15px 19px 5px 8px; }
.search input { flex: 1; min-width: 0; height: 70px; padding: 0 6px 3px; background: #fff; border: 3px solid #7d7d7d; }
.path { height: 67px; margin-right: -10px; padding: 0 6px 3px; background: #efefef; border: 3px solid #7d7d7d; box-shadow: inset 0 0 0 4px #fff; }
.fold-tools { padding-left: 12px; height: 82px; }
.fav { margin-left: 33px; margin-right: -9px; }

/* Status bar */
.status { display: flex; gap: 14px; height: 78px; padding-bottom: 4px; border-top: 2px solid #f6f6f6; }
.cell { flex: 1; border: 4px solid #8a8a8a; box-shadow: inset 0 0 0 4px #fff; }
.cell:first-child { margin-left: -24px; }
.progress { display: flex; width: 376px; padding: 8px 0; border: 4px solid #7d7d7d; border-right: 0; border-bottom-color: #e2e2e2; }
.progress button { width: 55px; margin-left: auto; border-left: 3px solid #aaa; }
.progress svg { width: 44px; height: 44px; }
.tail { display: flex; align-items: center; width: 40px; margin-left: -8px; padding-left: 4px; border-left: 4px solid #7d7d7d; border-top: 4px solid #7d7d7d; overflow: hidden; }
.tail svg { width: 46px; height: 46px; }

/* File selection window */
.dialog {
  position: absolute;
  left: 1277px;
  top: 459px;
  width: 944px;
  background: #efefef;
  border: 3px solid #787878;
  box-shadow: 0 14px 44px #0005;
}
.dlg-head { display: flex; align-items: center; height: 79px; padding: 0 30px 4px 9px; background: #fff; }
.dlg-head h2 { margin-left: 16px; font: 38px/60px "Open Sans", sans-serif; padding-bottom: 4px; }
.dlg-head button { margin-left: auto; color: #222; }
.dlg-head button svg { width: 36px; height: 36px; }
.dlg-body { display: flex; padding: 24px 20px 24px 28px; }
.form { width: 821px; padding-bottom: 10px; }
.form h3 { padding: 6px 0 29px; margin-left: -3px; }
.list { height: 563px; margin-left: 9px; background: #fff; border: 3px solid #8d939b; }
.info { width: 100%; margin: 33px 0 24px; justify-content: flex-start; border-left: 3px solid #fff; border-right: 3px solid #a6a6a6; }
.caret { width: 18px; height: 30px; margin: 0 42px 0 16px; background: #000; clip-path: polygon(0 0, 100% 50%, 0 100%); }
.field { display: flex; align-items: center; gap: 10px; margin: 0 0 24px 2px; }
.field button { height: 67px; padding: 0 24px 0 20px; }
.field input { flex: 1; min-width: 0; height: 73px; background: #efefef; border: 3px solid #7d7d7d; box-shadow: inset 0 0 0 4px #fff; }
button:disabled { background: #ccc; border: 3px solid #c0c0c0; color: #8a8a8a; }
.actions { display: flex; align-items: center; gap: 24px; padding: 45px 0 0 9px; }
.recent { width: 74px; }
.recent .tri { flex: none; }
.push { width: 163px; height: 62px; background: #e1e1e1; border: 3px solid #adadad; }
.push-first { margin-left: auto; margin-right: -12px; }
.rail { display: flex; justify-content: center; align-items: center; width: 20px; margin-left: auto; background: linear-gradient(#e5e5e5, #e5e5e5) center / 11px 100% no-repeat; }
.rail button { width: 20px; height: 160px; background: #fff; }
.rail i { width: 18px; height: 30px; background: #777; clip-path: polygon(0 0, 100% 50%, 0 100%); }

/* Callout over the window */
.pointer { position: absolute; left: 1438px; top: 1544px; width: 156px; height: 108px; }
.note { position: absolute; left: 1618px; top: 1502px; font: 77px/96px Lato, sans-serif; font-variant-ligatures: none; color: #f00; white-space: nowrap; }
```
